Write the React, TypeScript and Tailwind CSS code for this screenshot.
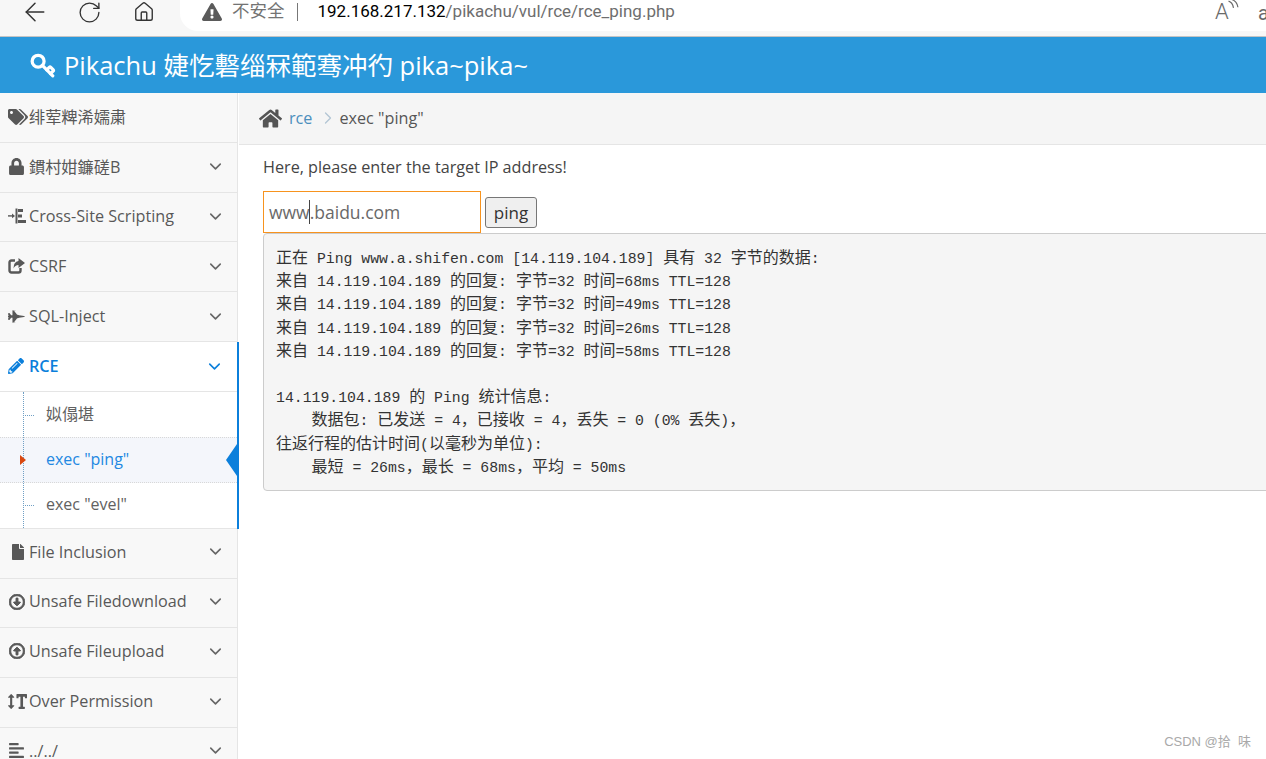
import { ArrowLeft, RotateCw, House, ChevronDown, ChevronRight, Key } from "lucide-react";
import {
  FaAlignLeft,
  FaExclamationTriangle,
  FaFighterJet,
  FaFile,
  FaHome,
  FaLock,
  FaPencilAlt,
  FaRegArrowAltCircleDown,
  FaRegArrowAltCircleUp,
  FaTags,
  FaTextHeight,
} from "react-icons/fa";
import type { ReactNode } from "react";

const cjkSans = "font-['Open_Sans','Noto_Sans_CJK_SC',sans-serif]";

function IndentIcon() {
  return (
    <svg width="18" height="16" viewBox="0 0 18 16" fill="currentColor">
      <rect x="0" y="7.2" width="5" height="1.4" />
      <path d="M4 5.5 L7 7.9 L4 10.3 Z" />
      <rect x="7.5" y="0.5" width="2" height="15" />
      <rect x="10" y="1" width="5" height="3" />
      <rect x="10" y="6.5" width="4" height="3" />
      <rect x="10" y="12" width="8" height="3" />
    </svg>
  );
}

function ShareIcon() {
  return (
    <svg width="17" height="16" viewBox="0 0 17 16" fill="none" stroke="currentColor">
      <path d="M12.5 10 V12.5 Q12.5 14.5 10.5 14.5 H3.5 Q1.5 14.5 1.5 12.5 V4.5 Q1.5 2.5 3.5 2.5 H7" strokeWidth="2.4" />
      <path d="M10.5 0 L17 5 L10.5 10 V7 Q7 7 5.5 10.5 Q5.5 3.5 10.5 3 Z" fill="currentColor" stroke="none" />
    </svg>
  );
}

const topItems: { icon: ReactNode; label: string; arrow: boolean }[] = [
  { icon: <FaTags size={20} />, label: "绯荤粺浠嬬粛", arrow: false },
  { icon: <FaLock size={17} />, label: "鏆村姏鐮磋В", arrow: true },
  { icon: <IndentIcon />, label: "Cross-Site Scripting", arrow: true },
  { icon: <ShareIcon />, label: "CSRF", arrow: true },
  { icon: <FaFighterJet size={17} />, label: "SQL-Inject", arrow: true },
];

const bottomItems: { icon: ReactNode; label: string }[] = [
  { icon: <FaFile size={16} className="ml-[2px]" />, label: "File Inclusion" },
  { icon: <FaRegArrowAltCircleDown size={16} stroke="currentColor" strokeWidth={30} className="ml-px" />, label: "Unsafe Filedownload" },
  { icon: <FaRegArrowAltCircleUp size={16} stroke="currentColor" strokeWidth={30} className="ml-px" />, label: "Unsafe Fileupload" },
  { icon: <FaTextHeight size={19} className="-scale-x-100" />, label: "Over Permission" },
  { icon: <FaAlignLeft size={17} />, label: "../../" },
];

const pingOutput = [
  "正在 Ping www.a.shifen.com [14.119.104.189] 具有 32 字节的数据:",
  "来自 14.119.104.189 的回复: 字节=32 时间=68ms TTL=128",
  "来自 14.119.104.189 的回复: 字节=32 时间=49ms TTL=128",
  "来自 14.119.104.189 的回复: 字节=32 时间=26ms TTL=128",
  "来自 14.119.104.189 的回复: 字节=32 时间=58ms TTL=128",
  "",
  "14.119.104.189 的 Ping 统计信息:",
  "    数据包: 已发送 = 4\uff0c已接收 = 4\uff0c丢失 = 0 (0% 丢失)\uff0c",
  "往返行程的估计时间(以毫秒为单位):",
  "    最短 = 26ms\uff0c最长 = 68ms\uff0c平均 = 50ms",
];

// CJK runs are a bit larger than the mono text around them
function PingLine({ text }: { text: string }) {
  const parts = text.split(/([\u4e00-\u9fff\uff0c]+)/);
  return (
    <div className="h-[23.2px] whitespace-pre">
      {parts.map((p, i) =>
        /[\u4e00-\u9fff\uff0c]/.test(p) ? (
          <span key={i} className="text-[16px] font-['Noto_Sans_CJK_SC',sans-serif]">
            {p}
          </span>
        ) : (
          <span key={i}>{p}</span>
        ),
      )}
    </div>
  );
}

function NavRow({ icon, label, arrow = true, low }: { icon: ReactNode; label: string; arrow?: boolean; low?: boolean }) {
  return (
    <div
      className={`h-[49.8px] mr-px bg-[#f8f8f8] flex items-center pl-2 pr-[12px] border-r border-b border-[#e5e5e5] text-[#585858] ${
        low ? "pb-[3px]" : "pb-px"
      }`}
    >
      <span className="w-[21px] flex items-center shrink-0">{icon}</span>
      <span className="flex-1 text-[16.2px] truncate">{label}</span>
      {arrow && <ChevronDown size={19} strokeWidth={2} className="text-[#666666]" />}
    </div>
  );
}

function SubRow({ label, active }: { label: string; active?: boolean }) {
  return (
    <div
      className={`relative h-[45.3px] flex items-center pl-[46px] pb-[2px] text-[16px] ${
        active ? "bg-[#f4f6fb] text-[#2288e2] border-y border-dotted border-[#d8d8d8]" : "text-[#616161]"
      }`}
    >
      {active ? (
        <span className="absolute left-[20px] top-1/2 -translate-y-1/2 w-0 h-0 border-y-[5px] border-y-transparent border-l-[6px] border-l-[#d9480f] z-20" />
      ) : (
        <span className="absolute left-[25px] top-1/2 w-[9px] border-t border-dotted border-[#6f9fc4]" />
      )}
      {label}
      {active && (
        <span className="absolute right-0 top-1/2 -translate-y-1/2 w-0 h-0 border-y-[16px] border-y-transparent border-r-[11px] border-r-[#0b7fdb]" />
      )}
    </div>
  );
}

export default function App() {
  return (
    <div className={`relative w-[1266px] h-[759px] overflow-hidden bg-white flex flex-col ${cjkSans}`}>
      {/* Browser chrome */}
      <div className="h-[37px] shrink-0 bg-[#f7f7f7] border-b border-[#c4c4c4] flex items-start">
        <div className="w-[180px] h-[24px] flex items-center text-[#333333] shrink-0">
          <ArrowLeft size={30} strokeWidth={1.2} className="ml-[20px]" />
          <RotateCw size={25} strokeWidth={1.3} className="ml-[27px]" />
          <House size={22} strokeWidth={1.5} className="ml-[31px]" />
        </div>
        <div className="flex-1 h-[31px] bg-white rounded-bl-[18px] flex items-center pl-[22px] pb-[8px] font-['Roboto','Noto_Sans_CJK_SC',sans-serif]">
          <FaExclamationTriangle size={20} className="text-[#5a5a5a]" />
          <span className="ml-[10px] text-[17.5px] text-[#737373]">不安全</span>
          <span className="ml-[12px] w-px h-[18px] bg-[#777777]" />
          <span className="ml-[20px] text-[17px] text-black">192.168.217.132</span>
          <span className="text-[17px] text-[#6e6e6e]">/pikachu/vul/rce/rce_ping.php</span>
          <span className="ml-auto relative mr-[27px] w-[24px] h-[24px] text-[#6a6a6a]">
            <span className="absolute left-0 top-0 text-[22px] leading-[24px] font-light">A</span>
            <svg viewBox="0 0 10 10" className="absolute left-[13px] top-[-1px] w-[11px] h-[11px]" fill="none" stroke="currentColor" strokeWidth="1.1">
              <path d="M0.5 2 Q4 3 5 8" />
              <path d="M3.5 0.5 Q8 2 9 7.5" />
            </svg>
          </span>
          <span className="absolute right-[-3px] top-[-2px] text-[20px] text-[#6a6a6a]">a</span>
        </div>
      </div>

      {/* Blue header */}
      <div className="h-[56px] shrink-0 bg-[#2a98da] text-white flex items-center pl-[30px]">
        <Key size={26} strokeWidth={3} className="-scale-y-100" />
        <span className="ml-[8px] text-[25.5px]">Pikachu 婕忔礊缁冧範骞冲彴 pika~pika~</span>
      </div>

      <div className="flex-1 flex min-h-0">
        {/* Sidebar */}
        <div className="w-[239px] shrink-0 overflow-hidden">
          {topItems.map((it) => (
            <NavRow key={it.label} icon={it.icon} label={it.label} arrow={it.arrow} />
          ))}
          <div className="relative bg-white border-r-2 border-[#0b7fdb]">
            <div className="h-[50px] flex items-center pl-2 pr-[13px] border-b border-[#e5e5e5] text-[#0b7fdb]">
              <span className="w-[21px] flex items-center shrink-0">
                <FaPencilAlt size={16} />
              </span>
              <span className="flex-1 text-[16.2px] font-semibold">RCE</span>
              <ChevronDown size={19} strokeWidth={2} />
            </div>
            <div className="relative border-b border-[#e5e5e5]">
              <span className="absolute left-[23px] top-0 bottom-0 border-l border-dotted border-[#6f9fc4] z-10" />
              <SubRow label="姒傝堪" />
              <SubRow label={'exec "ping"'} active />
              <SubRow label={'exec "evel"'} />
            </div>
          </div>
          {bottomItems.map((it) => (
            <NavRow key={it.label} icon={it.icon} label={it.label} low />
          ))}
        </div>

        {/* Main */}
        <div className="flex-1 min-w-0">
          <div className="h-[52px] bg-[#f5f5f5] border-b border-[#e5e5e5] flex items-center pl-[20px] pb-px text-[16.2px]">
            <FaHome size={23} className="text-[#555555]" />
            <span className="ml-[7px] text-[#4c8fbd]">rce</span>
            <ChevronRight size={20} strokeWidth={1.5} className="ml-[6px] text-[#b2c5d4]" />
            <span className="ml-px text-[#555555]">exec "ping"</span>
          </div>
          <div className="pl-[24px]">
            <p className="mt-[10px] mb-[12px] h-[24px] text-[16.2px] leading-[24px] text-[#444444]">Here, please enter the target IP address!</p>
            <div className="flex items-end">
              <div className="relative w-[218px] h-[42px] border border-[#f7931e] flex items-center pl-[5px] text-[17.5px] text-[#696969]">
                www.baidu.com
                <span className="absolute left-[45px] top-[8px] w-px h-[24px] bg-[#444444]" />
              </div>
              <div className="ml-[4px] mb-[5px] w-[52px] h-[31px] border border-[#767676] rounded-[3px] bg-[#efefef] flex items-center justify-center text-[17px] text-[#333333]">
                ping
              </div>
            </div>
            <div className="w-[1100px] h-[258px] bg-[#f5f5f5] border border-[#cccccc] rounded-[4px] pl-[12px] pt-[11px] font-['Liberation_Mono','Noto_Sans_CJK_SC',monospace] text-[14.8px] leading-[23.2px] text-[#333333]">
              {pingOutput.map((l, i) => (
                <PingLine key={i} text={l} />
              ))}
            </div>
          </div>
        </div>
      </div>

      {/* Watermark */}
      <span className="absolute right-[15px] bottom-[8px] text-[13px] text-[#a9a9a9] whitespace-pre font-['Liberation_Sans','Noto_Sans_CJK_SC',sans-serif]">
        CSDN @拾  味
      </span>
    </div>
  );
}
